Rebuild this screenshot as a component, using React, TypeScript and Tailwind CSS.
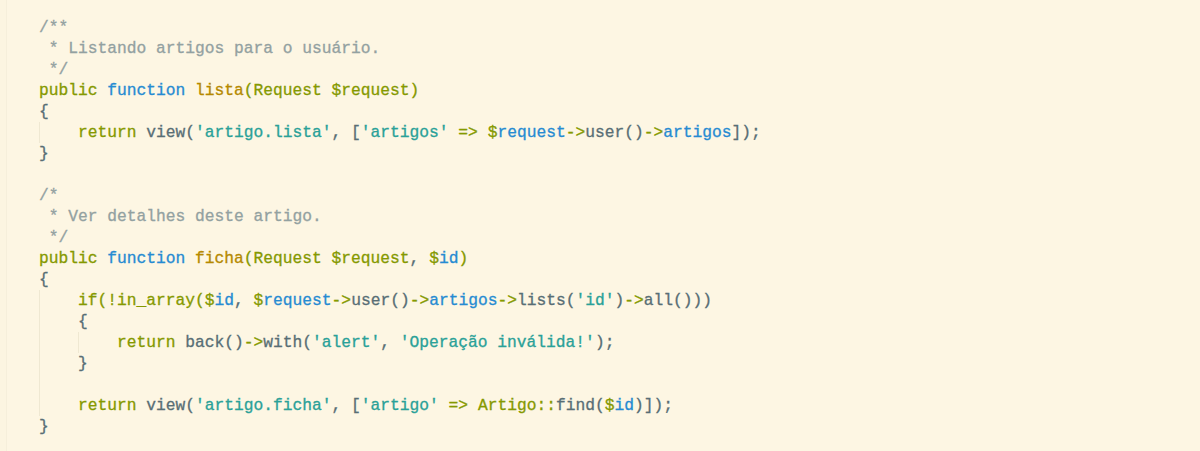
import React from "react";

type Tok = [string, string];

const G = "text-[#586e75]";
const K = "text-[#859900]";
const B = "text-[#268bd2]";
const Y = "text-[#b58900]";
const S = "text-[#2aa198]";
const C = "text-[#93a1a1]";

type Line = { indent: number; guides: number; toks: Tok[] };

const lines: Line[] = [
  { indent: 0, guides: 0, toks: [["/**", C]] },
  { indent: 0, guides: 0, toks: [[" * Listando artigos para o usuário.", C]] },
  { indent: 0, guides: 0, toks: [[" */", C]] },
  {
    indent: 0,
    guides: 0,
    toks: [
      ["public", K],
      [" ", G],
      ["function", B],
      [" ", G],
      ["lista", Y],
      ["(Request $request)", K],
    ],
  },
  { indent: 0, guides: 0, toks: [["{", G]] },
  {
    indent: 1,
    guides: 1,
    toks: [
      ["return", K],
      [" view(", G],
      ["'artigo.lista'", S],
      [", [", G],
      ["'artigos'", S],
      [" ", G],
      ["=>", K],
      [" ", G],
      ["$", K],
      ["request", B],
      ["->", K],
      ["user()", G],
      ["->", K],
      ["artigos", B],
      ["]);", G],
    ],
  },
  { indent: 0, guides: 0, toks: [["}", G]] },
  { indent: 0, guides: 0, toks: [] },
  { indent: 0, guides: 0, toks: [["/*", C]] },
  { indent: 0, guides: 0, toks: [[" * Ver detalhes deste artigo.", C]] },
  { indent: 0, guides: 0, toks: [[" */", C]] },
  {
    indent: 0,
    guides: 0,
    toks: [
      ["public", K],
      [" ", G],
      ["function", B],
      [" ", G],
      ["ficha", Y],
      ["(Request $request", K],
      [", ", G],
      ["$", K],
      ["id", B],
      [")", K],
    ],
  },
  { indent: 0, guides: 0, toks: [["{", G]] },
  {
    indent: 1,
    guides: 1,
    toks: [
      ["if(!in_array(", K],
      ["$", K],
      ["id", B],
      [", ", G],
      ["$", K],
      ["request", B],
      ["->", K],
      ["user()", G],
      ["->", K],
      ["artigos", B],
      ["->", K],
      ["lists(", G],
      ["'id'", S],
      [")", G],
      ["->", K],
      ["all()))", G],
    ],
  },
  { indent: 1, guides: 1, toks: [["{", G]] },
  {
    indent: 2,
    guides: 2,
    toks: [
      ["return", K],
      [" back()", G],
      ["->", K],
      ["with(", G],
      ["'alert'", S],
      [", ", G],
      ["'Operação inválida!'", S],
      [");", G],
    ],
  },
  { indent: 1, guides: 1, toks: [["}", G]] },
  { indent: 1, guides: 1, toks: [] },
  {
    indent: 1,
    guides: 1,
    toks: [
      ["return", K],
      [" view(", G],
      ["'artigo.ficha'", S],
      [", [", G],
      ["'artigo'", S],
      [" ", G],
      ["=>", K],
      [" ", G],
      ["Artigo::", K],
      ["find(", G],
      ["$", K],
      ["id", B],
      [")]);", G],
    ],
  },
  { indent: 0, guides: 0, toks: [["}", G]] },
];

function Indent({ guide }: { guide: boolean }) {
  return (
    <span
      className={
        guide
          ? "inline-block w-[4ch] h-[21px] align-top shadow-[inset_1px_0_0_#efe8d2]"
          : "inline-block w-[4ch] h-[21px] align-top"
      }
    >
      {"    "}
    </span>
  );
}

export default function App() {
  return (
    <div className="w-[1200px] h-[451px] bg-[#fdf6e3] flex overflow-hidden">
      <div className="w-[7px] h-full border-r border-[#f6efdb] bg-[#fcf5e1]" />
      <div
        className="pl-[32px] pt-[17px] text-[16.25px] leading-[21px] whitespace-pre text-[#586e75] [-webkit-text-stroke:0.3px_currentColor]"
        style={{ fontFamily: '"Liberation Mono", "DejaVu Sans Mono", monospace' }}
      >
        {lines.map((l, i) => (
          <div key={i} className="h-[21px]">
            {Array.from({ length: l.indent }).map((_, j) => (
              <Indent key={j} guide={j < l.guides} />
            ))}
            {l.toks.map((t, j) => (
              <span key={j} className={t[1]}>
                {t[0]}
              </span>
            ))}
          </div>
        ))}
      </div>
    </div>
  );
}
